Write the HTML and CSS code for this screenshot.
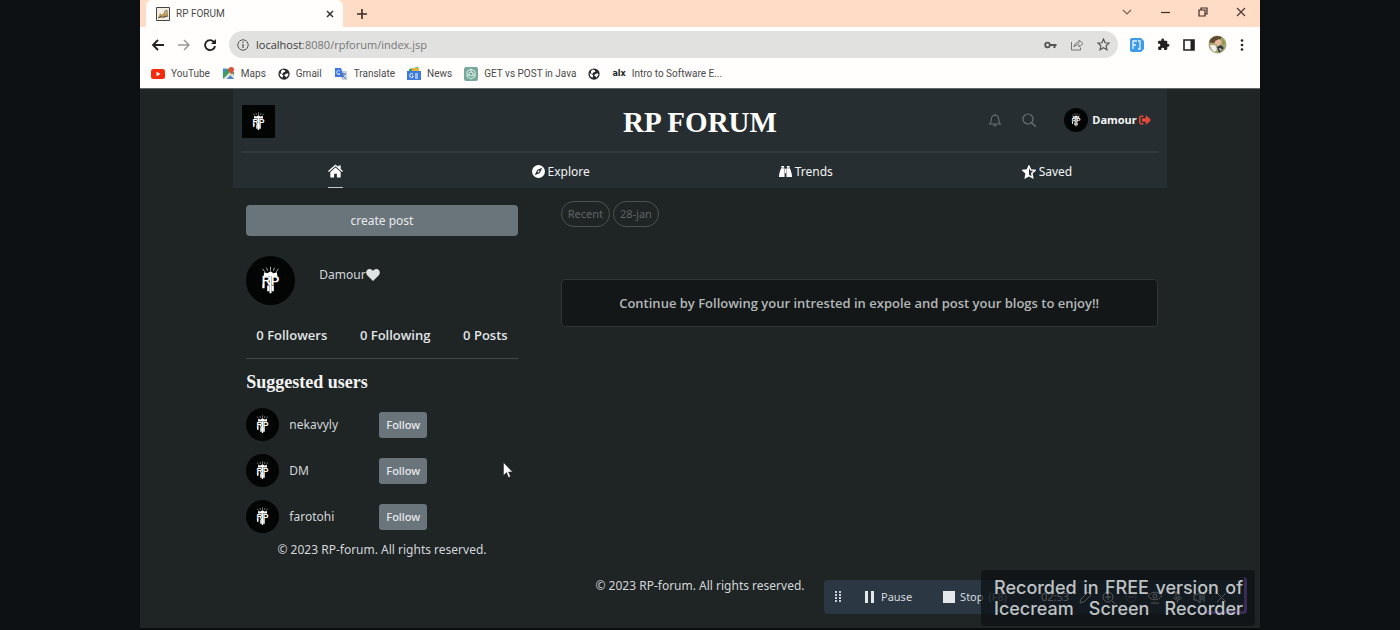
FILE: index.html
```html
<!DOCTYPE html>
<html lang="en">
<head>
<meta charset="utf-8">
<meta name="viewport" content="width=device-width, initial-scale=1">
<title>RP FORUM</title>
<link rel="stylesheet" href="styles.css">
</head>
<body>
<svg class="defs" aria-hidden="true">
  <symbol id="crest" viewBox="0 0 50 50">
    <path d="M19 16l-2-3M22 15l-1-3M25 15v-4M28 15l1-3M31 16l2-3" stroke="#aaa" stroke-width="1"/>
    <path d="M18 20.500l.5-4 3.500 1 3-2 3 2 3.500-1 .5 4z" fill="#fff"/>
    <text x="25" y="30" text-anchor="middle" class="crest-text">RP</text>
    <path d="M25 20v18" stroke="#fff" stroke-width="2"/>
    <path d="M22.800 30v6M27.200 30v6M17.800 29v4" stroke="#fff" stroke-width="2.400"/>
  </symbol>
  <symbol id="globe" viewBox="0 0 16 16">
    <circle cx="8" cy="8" r="7.500" fill="#26282b"/>
    <path d="M2 7l3 1 2 2-1 3-3-2zM6 2l3 1 1 2-3 1-1 2-2-1 0-3zM10 8l3-1 1 2-3 4-1-2-2-1z" fill="#fff"/>
  </symbol>
</svg>

<div class="window">
  <div class="tabs">
    <div class="tab">
      <svg width="14" height="14" viewBox="0 0 14 14"><path d="M.5.500h13v13H.5z" fill="#f3eee2" stroke="#444"/><path d="M2 11l2-5 2 2 2-3 1 1 3-3v6l-4 2z" fill="#b99a5b"/><path d="M2 11l4-2M8 5l3-2M7 10l5-1" stroke="#555"/></svg>
      <span class="tab-title">RP FORUM</span>
      <button class="plain" aria-label="Close tab"><svg width="8" height="8" viewBox="0 0 8 8"><path d="M1 1l6 6M7 1L1 7" stroke="#333" stroke-width="1.500"/></svg></button>
    </div>
    <button class="plain new-tab" aria-label="New tab"><svg width="10" height="10" viewBox="0 0 10 10"><path d="M5 0v10M0 5h10" stroke="#3a2a22" stroke-width="1.600"/></svg></button>
    <div class="window-controls">
      <button class="plain" aria-label="Search tabs"><svg width="10" height="10" viewBox="0 0 10 10"><path d="M1 3l4 4 4-4" fill="none" stroke="#7b5d4e" stroke-width="1.200"/></svg></button>
      <button class="plain" aria-label="Minimize"><svg width="10" height="10" viewBox="0 0 10 10"><path d="M1 5.500h9" stroke="#3d2c25" stroke-width="1.200"/></svg></button>
      <button class="plain" aria-label="Restore"><svg width="10" height="10" viewBox="0 0 10 10"><path d="M1 3h6v6H1zM3 3V1h6v6H7" fill="none" stroke="#3d2c25" stroke-width="1.200"/></svg></button>
      <button class="plain" aria-label="Close"><svg width="10" height="10" viewBox="0 0 10 10"><path d="M1 1l8 8M9 1L1 9" stroke="#4d3a31" stroke-width="1.200"/></svg></button>
    </div>
  </div>

  <div class="toolbar">
    <button class="plain" aria-label="Back"><svg width="14" height="14" viewBox="0 0 14 14"><path d="M13 7H2M7 2L2 7l5 5" fill="none" stroke="#222" stroke-width="1.800"/></svg></button>
    <button class="plain" aria-label="Forward"><svg width="14" height="14" viewBox="0 0 14 14"><path d="M1 7h11M7 2l5 5-5 5" fill="none" stroke="#9a9a9a" stroke-width="1.500"/></svg></button>
    <button class="plain" aria-label="Reload"><svg width="14" height="14" viewBox="0 0 14 14"><path d="M11 4a5 5 0 1 0 1 4" fill="none" stroke="#222" stroke-width="1.900"/><path d="M13 1v5H8z" fill="#222"/></svg></button>
    <div class="address">
      <svg width="12" height="12" viewBox="0 0 12 12"><circle cx="6" cy="6" r="5.200" fill="none" stroke="#555"/><path d="M6 5v4M6 2.800v1.200" stroke="#555" stroke-width="1.300"/></svg>
      <span class="url">localhost<span class="url-path">:8080/rpforum/index.jsp</span></span>
      <svg width="13" height="10" viewBox="0 0 13 10"><circle cx="3.500" cy="5" r="2.300" fill="none" stroke="#555" stroke-width="1.800"/><path d="M6 5h6.500M10.500 5v3" stroke="#555" stroke-width="2"/></svg>
      <svg width="14" height="13" viewBox="0 0 14 13"><path d="M1.500 4v8h9V9.500M4 9c.3-3 2-4.500 5-4.500V2l4 3.500L9 9V6.700C7 6.700 5.300 7 4 9z" fill="none" stroke="#777"/></svg>
      <svg width="13" height="13" viewBox="0 0 14 14"><path d="M7 1.200l1.700 3.900 4.300.4-3.200 2.900.9 4.200L7 10.400l-3.700 2.200.9-4.200L1 5.500l4.300-.4z" fill="none" stroke="#555" stroke-width="1.300"/></svg>
    </div>
    <div class="extensions">
      <svg width="14" height="14" viewBox="0 0 14 14"><path d="M2 0h9l3 3v8l-3 3H2a2 2 0 0 1-2-2V2a2 2 0 0 1 2-2z" fill="#3f9ae8"/><path d="M3 11V3h4M3 7h3M8 3h2v8H8" fill="none" stroke="#e3f2ff" stroke-width="1.300"/></svg>
      <svg width="13" height="13" viewBox="0 0 24 24"><path d="M20.500 11H19V7a2 2 0 0 0-2-2h-4V3.500a2.500 2.500 0 0 0-5 0V5H4a2 2 0 0 0-2 2v3.800h1.500a2.700 2.700 0 0 1 0 5.400H2V20a2 2 0 0 0 2 2h3.800v-1.500a2.700 2.700 0 0 1 5.400 0V22H17a2 2 0 0 0 2-2v-4h1.500a2.500 2.500 0 0 0 0-5z" fill="#222"/></svg>
      <svg width="12" height="12" viewBox="0 0 12 12"><path d="M1 1h10v10H1z" fill="#fff" stroke="#222" stroke-width="1.600"/><path d="M7.500 1H11v10H7.500z" fill="#222"/></svg>
      <svg width="19" height="19" viewBox="0 0 19 19"><circle cx="9.500" cy="9.500" r="9" fill="#a9a777"/><path d="M1 7a9 9 0 0 1 8-6l5 1-4 5-6 1z" fill="#5d4a35"/><path d="M7 6l4-2 3 3-3 4-4-2z" fill="#e8b79b"/><path d="M2 10l5 0 2 4-2 3-3-2z" fill="#f1efe9"/><path d="M9 12l4-2 3 3-5 5z" fill="#33363a"/><path d="M11 13l3 1-2 2z" fill="#dfe3e6"/><path d="M14 3l3 4-1 4-2-3z" fill="#8f9a4a"/></svg>
      <svg width="4" height="12" viewBox="0 0 4 12" fill="#222"><circle cx="2" cy="1.500" r="1.300"/><circle cx="2" cy="6" r="1.300"/><circle cx="2" cy="10.500" r="1.300"/></svg>
    </div>
  </div>

  <nav class="bookmarks" aria-label="Bookmarks">
    <a href="#"><svg width="14" height="14" viewBox="0 0 14 14"><rect y="2" width="14" height="10" rx="2.500" fill="#f32b0c"/><path d="M5.500 4.700L9.500 7l-4 2.300z" fill="#fff"/></svg>YouTube</a>
    <a href="#"><svg width="13" height="13" viewBox="0 0 14 14"><path d="M1 2h8l4 4v7H1z" fill="#3f9b62"/><path d="M1 13l8-8 4 4v4z" fill="#e6e3d6"/><path d="M1 2h4L1 7z" fill="#4785e8"/><path d="M5 13l4-4 4 4z" fill="#4a83d9"/><path d="M10 0a3 3 0 0 1 3 3c0 2-2 3-3 5-1-2-3-3-3-5a3 3 0 0 1 3-3z" fill="#e0513d"/></svg>Maps</a>
    <a href="#"><svg width="12" height="12"><use href="#globe"/></svg>Gmail</a>
    <a href="#"><svg width="14" height="14" viewBox="0 0 14 14"><path d="M6 4h7v9H8z" fill="#c9d1dd"/><path d="M1 1h6l3 9H1z" fill="#3f78e0"/><path d="M6 4a2 2 0 1 0 0 3H4" fill="none" stroke="#dfeaff"/><path d="M8 7h4M10 6v1c0 2-1 3-2 4m1-2l3 3" fill="none" stroke="#5d7bb5"/></svg>Translate</a>
    <a href="#"><svg width="14" height="14" viewBox="0 0 14 14"><path d="M2 2l9-2 1 4H2z" fill="#42a35a"/><path d="M5 1h7v4H5z" fill="#e4b33b"/><path d="M0 4h14v9H0z" fill="#3b7ae0"/><path d="M6 7a2 2 0 1 0 0 3V9H5M8 7h3M8 9h3M8 11h3" fill="none" stroke="#fff"/></svg>News</a>
    <a href="#"><svg width="14" height="14" viewBox="0 0 14 14"><rect width="14" height="14" rx="2" fill="#76a99b"/><path d="M7 2l4 2.500v5L7 12l-4-2.500v-5zM7 5l2 1v2L7 9 5 8V6zM7 2v3M11 9.500L9 8M3 9.500L5 8" fill="none" stroke="#e3f0ec"/></svg>GET vs POST in Java</a>
    <a href="#" aria-label="Untitled bookmark"><svg width="12" height="12"><use href="#globe"/></svg></a>
    <a href="#"><b class="alx">alx</b>Intro to Software E...</a>
  </nav>

  <div class="page">
    <div class="app">
      <header class="header">
        <div class="brand-row">
          <a href="#" class="brand-logo" aria-label="Home"><svg width="33" height="33"><use href="#crest"/></svg></a>
          <h1 class="brand">RP FORUM</h1>
          <div class="account">
            <button class="plain" aria-label="Notifications"><svg width="14" height="14" viewBox="0 0 16 16"><path d="M2 12.500h12c-1.500-1.500-1.500-3-1.800-5.500C12 4.500 10.500 2.500 8 2.500S4 4.500 3.800 7c-.3 2.500-.3 4-1.800 5.500zM8 2.500V.8M6.300 13.500a1.800 1.800 0 0 0 3.400 0" fill="none" stroke="#6b7073" stroke-width="1.200"/></svg></button>
            <button class="plain search" aria-label="Search"><svg width="14" height="14" viewBox="0 0 14 14"><circle cx="6" cy="6" r="5" fill="none" stroke="#6b7073" stroke-width="1.200"/><path d="M9.700 9.700l4 4" stroke="#6b7073" stroke-width="1.400"/></svg></button>
            <span class="avatar"><svg width="24" height="24"><use href="#crest"/></svg></span>
            <strong class="account-name">Damour</strong>
            <button class="plain" aria-label="Sign out"><svg width="12" height="12" viewBox="0 0 512 512"><path d="M497 273L329 441c-15 15-41 4.500-41-17v-96H152c-13.300 0-24-10.700-24-24v-96c0-13.300 10.700-24 24-24h136V88c0-21.400 25.900-32 41-17l168 168c9.300 9.400 9.300 24.600 0 34zM192 436v-40c0-6.600-5.400-12-12-12H96c-17.700 0-32-14.300-32-32V160c0-17.700 14.300-32 32-32h84c6.600 0 12-5.400 12-12V76c0-6.600-5.400-12-12-12H96c-53 0-96 43-96 96v192c0 53 43 96 96 96h84c6.600 0 12-5.400 12-12z" fill="#e5493a"/></svg></button>
          </div>
        </div>
        <nav class="main-nav" aria-label="Main">
          <a href="#" class="current" aria-label="Home"><svg width="15" height="14" viewBox="0 0 16 14"><path d="M0 7l8-7 3 2.600V1h2.500v3.800L16 7l-1 1-7-6-7 6z" fill="#fff"/><path d="M8 3.300L13.500 8v6h-4v-4h-3v4h-4V8z" fill="#fff"/></svg></a>
          <a href="#"><svg width="13" height="13" viewBox="0 0 14 14"><circle cx="7" cy="7" r="7" fill="#fff"/><path d="M11 3L8.500 8.500 3 11l2.500-5.500z" fill="#272e31"/><circle cx="7" cy="7" r="1" fill="#fff"/></svg>Explore</a>
          <a href="#"><svg width="13" height="13" viewBox="0 0 14 14"><path d="M2.500 1h3v2h-3zM8.500 1h3v2h-3zM2.200 3.500H6V13H0c0-4 1-6 2.200-9.500zM8 3.500h3.800C13 7 14 9 14 13H8zM6.400 4h1.200v5H6.400z" fill="#fff"/></svg>Trends</a>
          <a href="#"><svg width="14" height="14" viewBox="0 0 14 14"><path d="M7 1.200l1.700 3.700 4.200.5-3.100 2.800.8 4.300L7 10.500l-3.600 2 .8-4.300L1 5.400l4.300-.5z" fill="none" stroke="#fff" stroke-width="1.500"/><path d="M7 0v11l-4 2 .8-4.500L.5 5.200l4.500-.7z" fill="#fff"/></svg>Saved</a>
        </nav>
      </header>

      <div class="content">
        <aside class="sidebar">
          <button class="btn create">create post</button>
          <div class="profile">
            <span class="avatar"><svg width="49" height="49"><use href="#crest"/></svg></span>
            <span class="profile-name">Damour<svg width="14" height="12" viewBox="0 0 14 12"><path d="M7 12L1.200 6.300C-.8 4 .2.300 3.400.1 5 0 6.300.8 7 2c.7-1.200 2-2 3.600-1.900 3.200.2 4.200 3.900 2.200 6.200z" fill="#dfe3e6"/></svg></span>
          </div>
          <div class="stats"><strong>0 Followers</strong><strong>0 Following</strong><strong>0 Posts</strong></div>
          <h2 class="suggested">Suggested users</h2>
          <ul class="users">
            <li><span class="avatar"><svg width="33" height="33"><use href="#crest"/></svg></span><span>nekavyly</span><button class="btn follow">Follow</button></li>
            <li><span class="avatar"><svg width="33" height="33"><use href="#crest"/></svg></span><span>DM</span><button class="btn follow">Follow</button></li>
            <li><span class="avatar"><svg width="33" height="33"><use href="#crest"/></svg></span><span>farotohi</span><button class="btn follow">Follow</button></li>
          </ul>
          <p class="copyright">© 2023 RP-forum. All rights reserved.</p>
        </aside>
        <main class="feed">
          <div class="filters"><button class="pill">Recent</button><button class="pill">28-jan</button></div>
          <p class="notice">Continue by Following your intrested in expole and post your blogs to enjoy!!</p>
        </main>
      </div>
    </div>
    <footer class="copyright page-footer">© 2023 RP-forum. All rights reserved.</footer>
  </div>

  <div class="recorder">
    <svg width="7" height="12" viewBox="0 0 7 12" fill="#ccd2d8"><path d="M0 0h2v2H0zM4 0h2v2H4zM0 3h2v2H0zM4 3h2v2H4zM0 6h2v2H0zM4 6h2v2H4zM0 9h2v2H0zM4 9h2v2H4z"/></svg>
    <button class="plain pause"><svg width="9" height="12" viewBox="0 0 9 12"><path d="M0 0h3v12H0zM6 0h3v12H6z" fill="#e4e8eb"/></svg>Pause</button>
    <button class="plain stop"><svg width="12" height="12" viewBox="0 0 12 12"><path d="M0 0h12v12H0z" fill="#e4e8eb"/></svg>Stop <span class="key">(F8)</span></button>
    <span class="time">02:53</span>
    <span class="recorder-tools">
      <svg width="13" height="13" viewBox="0 0 13 13"><path d="M1 12l1-4 7-7 3 3-7 7z"/></svg>
      <svg width="13" height="13" viewBox="0 0 13 13"><circle cx="6" cy="6" r="5"/><path d="M6 3v6M3 6h6M10 10l3 3"/></svg>
      <svg width="13" height="13" viewBox="0 0 13 13"><circle cx="6" cy="6" r="5" stroke-opacity=".3"/><path d="M3 6h6" stroke-opacity=".5"/></svg>
      <svg width="14" height="13" viewBox="0 0 14 13"><path d="M0 5c4-5 10-5 14 0-4 5-10 5-14 0zM3 12h8"/><circle cx="7" cy="5" r="2"/></svg>
      <svg width="11" height="13" viewBox="0 0 11 13"><path d="M4 1h3v6H4zM2 6c0 4 7 4 7 0M5.500 9v3"/></svg>
      <svg width="13" height="13" viewBox="0 0 13 13"><path d="M1 4h3l3-3v11L4 9H1zM9 4v5M11 2v9"/></svg>
      <svg width="11" height="13" viewBox="0 0 11 13"><path d="M1 2l9 9M10 2l-9 9"/></svg>
    </span>
  </div>
  <div class="watermark"><span>Recorded in FREE version of</span><span>Icecream Screen Recorder</span></div>
  <svg class="cursor" width="10" height="16" viewBox="0 0 10 16"><path d="M.5.500v13l3-3 2 5 2-1-2-4.500h4z" fill="#fff" stroke="#222" stroke-width=".5"/></svg>
</div>
</body>
</html>
```
FILE: styles.css
```css
* { box-sizing: border-box; }

body {
  margin: 0;
  font-family: "Noto Sans", "Open Sans", sans-serif;
  font-size: 12px;
  line-height: 18px;
  color: #d3d7da;
  background: #0d1113;
}

svg { display: block; flex: none; }
a { color: inherit; text-decoration: none; }
h1, h2, p, ul { margin: 0; padding: 0; }
button { font: inherit; color: inherit; cursor: pointer; }

.defs { display: none; }
.crest-text { font: 700 13px "Liberation Sans", sans-serif; fill: #fff; }
.plain { display: flex; align-items: center; padding: 0; border: 0; background: none; }

.window {
  position: relative;
  display: flex;
  flex-direction: column;
  width: 80%;
  min-height: 100vh;
  margin: 0 auto;
  background: #1f2425;
  border-bottom: 2px solid #0a0d0e;
}

/* Browser chrome */
.tabs { display: flex; align-items: center; height: 27px; padding-left: 6px; background: #ffdcc5; }
.tab {
  display: flex;
  align-items: center;
  gap: 6px;
  width: 197px;
  height: 27px;
  padding: 0 9px 0 10px;
  border-radius: 6px 6px 0 0;
  background: #fffefd;
  color: #4a4a4a;
  font-family: Roboto, sans-serif;
  font-size: 10px;
}
.tab-title { flex: 1; }
.new-tab { margin-left: 14px; }
.window-controls { display: flex; align-self: flex-start; gap: 28px; height: 23px; margin-left: auto; padding-right: 14px; }

.toolbar { display: flex; align-items: center; gap: 12px; height: 35px; padding: 0 16px 0 11px; background: #fffefd; }
.address {
  display: flex;
  flex: 1;
  align-items: center;
  gap: 13px;
  height: 27px;
  padding: 0 8px;
  border-radius: 14px;
  background: #e1e1e0;
  color: #3b3b3b;
  font-family: "Open Sans", sans-serif;
  font-size: 11px;
}
.url { flex: 1; margin-left: -6px; }
.url-path { color: #777; }
.extensions { display: flex; align-items: center; gap: 13px; }

.bookmarks {
  display: flex;
  align-items: center;
  gap: 12px;
  height: 27px;
  padding: 0 11px 3px;
  border-bottom: 1px solid #63686b;
  background: #fffefd;
  color: #4a4a4a;
  font-family: Roboto, sans-serif;
  font-size: 10px;
  white-space: nowrap;
}
.bookmarks a { display: flex; align-items: center; gap: 6px; }
.alx { color: #222; font: 700 8px/12px "DejaVu Sans", sans-serif; }

/* Forum */
.page { display: flex; flex: 1; flex-direction: column; }
.app { width: calc(100% * 5 / 6); margin: 0 auto; }
.header { background: #272e31; }
.brand-row {
  display: grid;
  grid-template-columns: 1fr auto 1fr;
  align-items: center;
  height: 64px;
  margin: 0 9px;
  padding-top: 3px;
  border-bottom: 2px solid #343b3f;
}
.brand-logo { justify-self: start; background: #030404; }
.brand { color: #fff; font: 700 29px/36px "Liberation Serif", serif; }
.account { display: flex; align-items: center; justify-self: end; padding: 0 7px 3px 0; }
.search { margin: 0 28px 0 20px; }
.account-name { margin: 0 2px 0 4px; color: #f2f4f5; font-size: 11px; }
.avatar { flex: none; overflow: hidden; border-radius: 50%; background: #030404; }

.main-nav { display: flex; justify-content: space-around; height: 35px; color: #f2f4f5; }
.main-nav a { display: flex; align-items: center; gap: 3px; padding-top: 2px; }
.main-nav .current { border-bottom: 1px solid #c3c7ca; }

.content { display: grid; grid-template-columns: 5fr 11fr; gap: 43px; padding: 0 9px 0 13px; }
.btn { border: 0; border-radius: 4px; background: #6a747b; color: #e8ebed; }
.create { width: 100%; height: 31px; margin-top: 17px; }
.profile { display: flex; gap: 24px; margin-top: 20px; }
.profile-name { display: flex; align-items: center; height: 38px; }
.stats {
  display: flex;
  justify-content: space-between;
  height: 54px;
  padding: 21px 10px 0;
  border-bottom: 1px solid #42484b;
  color: #e1e4e6;
  font-family: "Open Sans", sans-serif;
  font-size: 13px;
}
.stats strong { font-weight: 600; }
.suggested { margin-top: 11px; color: #f4f4f4; font: 700 18px/24px "Liberation Serif", serif; }
.users { display: grid; gap: 13px; margin-top: 14px; list-style: none; }
.users li { display: grid; grid-template-columns: 33px 80px auto; gap: 10px; align-items: center; justify-content: start; }
.follow { height: 26px; padding: 0 7px; border-radius: 3px; font-size: 11px; font-weight: 500; }
.copyright { text-align: center; }
.sidebar .copyright { margin-top: 8px; }
.page-footer { margin-top: 18px; }

.filters { display: flex; gap: 3px; margin-top: 13px; }
.pill { height: 26px; padding: 0 6px; border: 1px solid #4c5153; border-radius: 13px; background: none; color: #5f6466; font-size: 11px; }
.notice {
  margin-top: 52px;
  padding: 14px 16px;
  border: 1px solid #303537;
  border-radius: 4px;
  background: #131718;
  color: #b4b7b8;
  font-family: "Open Sans", sans-serif;
  font-size: 13px;
  font-weight: 600;
  text-align: center;
}

/* Screen recorder overlay */
.recorder {
  position: absolute;
  right: 13px;
  bottom: 14px;
  display: flex;
  align-items: center;
  width: 423px;
  height: 34px;
  padding: 0 20px 0 11px;
  border-radius: 4px;
  background: #2b3844;
  color: #d5dade;
  font-size: 11px;
}
.recorder::after {
  content: "";
  position: absolute;
  right: 0;
  bottom: 0;
  width: 40px;
  height: 34px;
  border: solid #a070ff;
  border-width: 0 3px 3px 0;
  border-radius: 0 4px 4px 0;
}
.pause { gap: 7px; margin-left: 23px; }
.stop { gap: 5px; margin-left: 31px; }
.key { color: #8b949c; }
.time { margin-left: auto; color: #e4ebf2; }
.recorder-tools { display: flex; gap: 10px; margin-left: 10px; fill: none; stroke: #f3faff; }
.watermark {
  position: absolute;
  right: 5px;
  bottom: 2px;
  width: 274px;
  padding: 7px 12px 7px 13px;
  border-radius: 4px;
  background: rgba(12, 15, 17, 0.7);
  color: #bfc2c4;
  font: 500 18px/21px Inter, sans-serif;
}
.watermark span { display: block; text-align: justify; text-align-last: justify; white-space: nowrap; }
.cursor { position: absolute; top: 462px; left: 363px; }
```
